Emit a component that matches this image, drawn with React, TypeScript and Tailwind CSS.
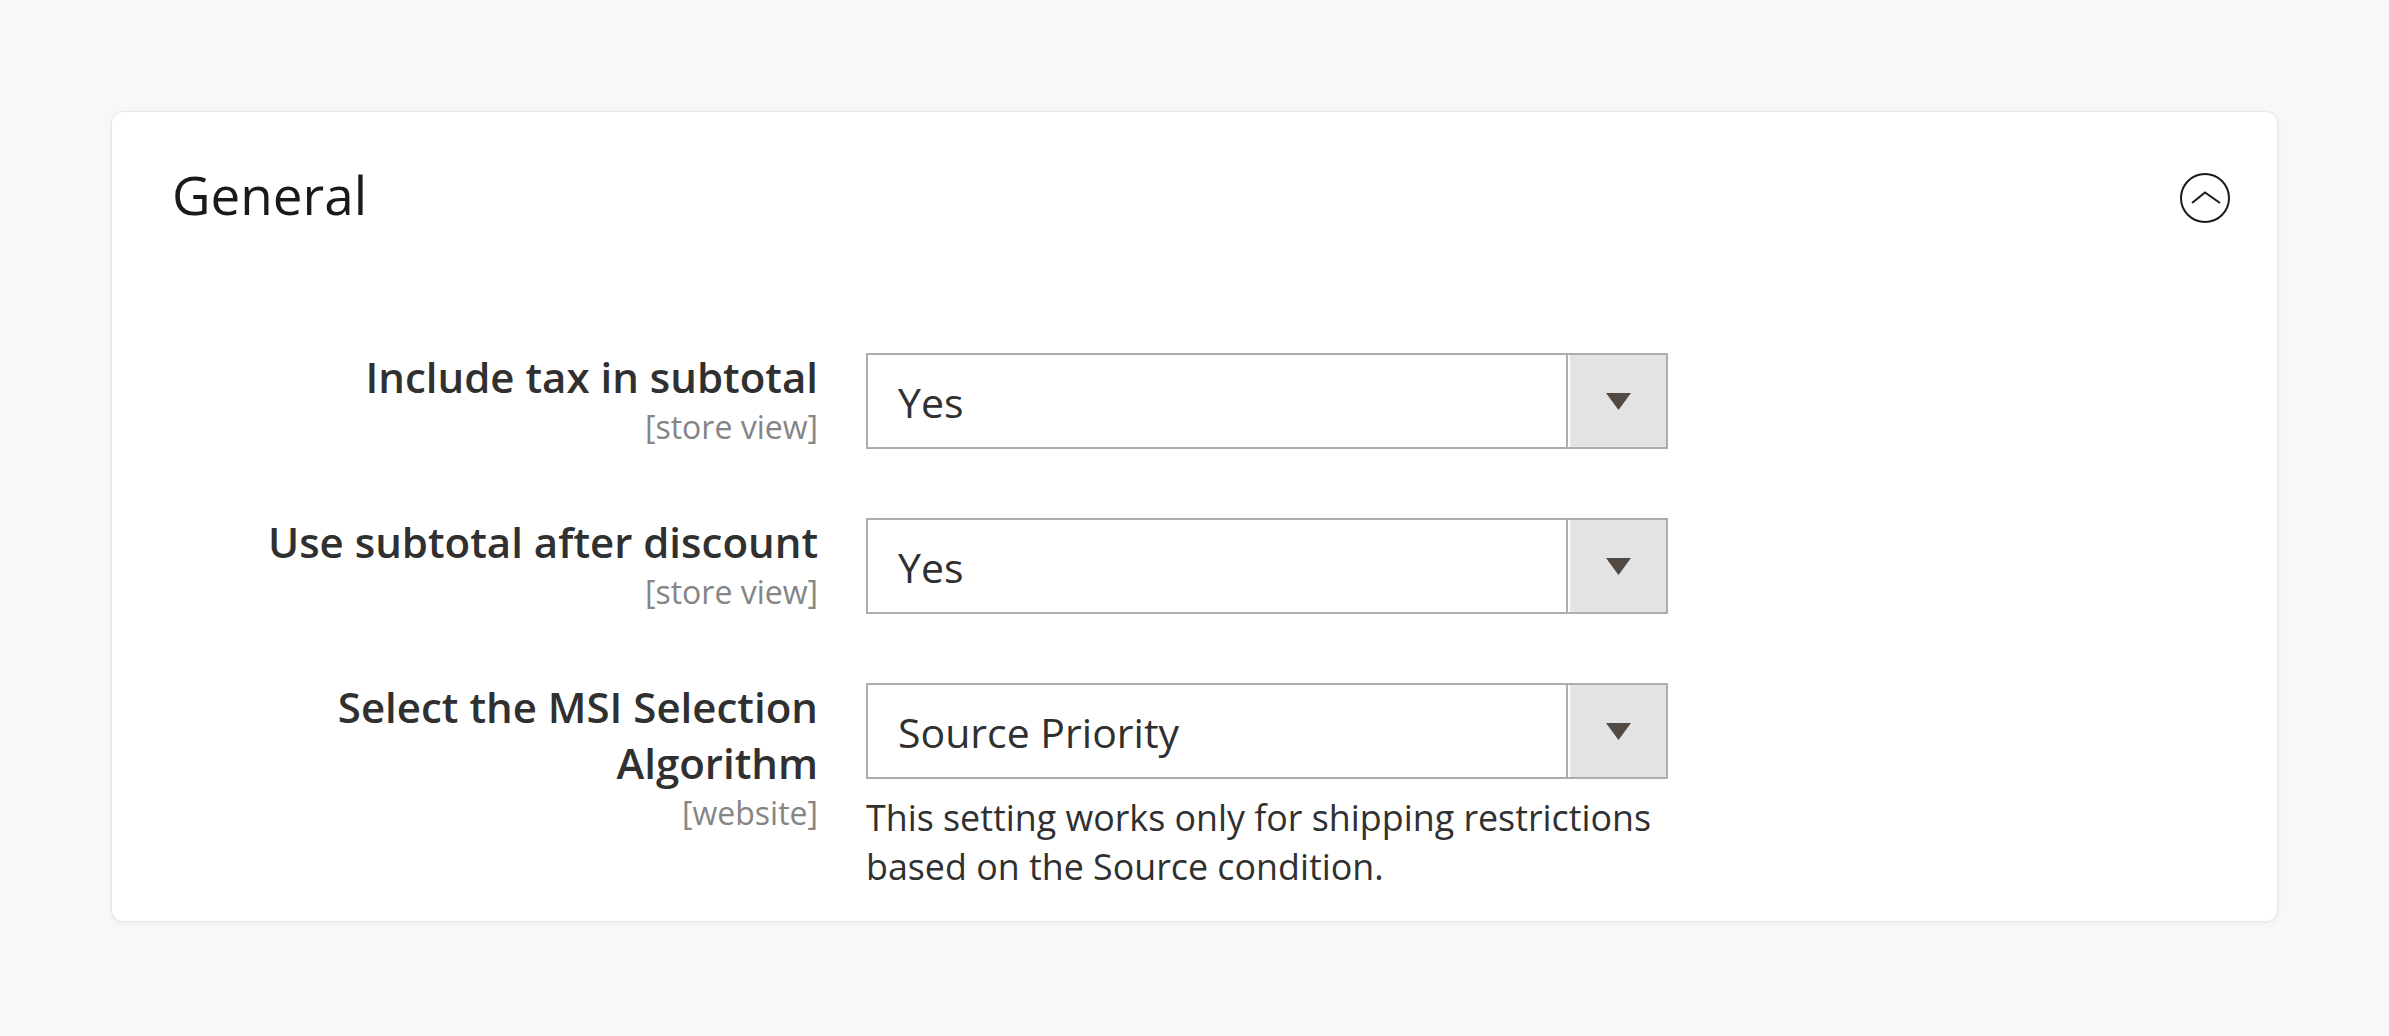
const rows = [
	{ label: "Include tax in subtotal", scope: "[store view]", value: "Yes" },
	{ label: "Use subtotal after discount", scope: "[store view]", value: "Yes" },
	{
		label: "Select the MSI Selection Algorithm",
		scope: "[website]",
		value: "Source Priority",
		note: "This setting works only for shipping restrictions based on the Source condition.",
	},
];

const Select = ({ value }: { value: string }) => {
	return (
		<div className="flex h-[96px] w-[802px] border-2 border-[#adadad] bg-white">
			<div className="flex flex-1 items-center pt-[3px] pl-[30px] text-[41px] text-[#303030]">
				{value}
			</div>
			<div className="flex border-l-2 border-[#adadad] bg-white pl-[2px]">
				<div className="flex w-[96px] items-center justify-center bg-[#e3e3e3]">
					<svg width="25" height="17" viewBox="0 0 25 17">
						<polygon points="0,0 25,0 12.5,17" fill="#514943" />
					</svg>
				</div>
			</div>
		</div>
	);
};

export default function App() {
	return (
		<div className="min-h-screen bg-[#f8f8f8] px-[111px] pt-[111px] font-['Open_Sans',sans-serif]">
			<section className="rounded-[12px] border border-[#e6e6e6] bg-white pt-[51px] pr-[47px] pb-[30px] pl-[60px] shadow-[0_2px_6px_rgba(0,0,0,0.05)]">
				<div className="flex items-start justify-between">
					<h2 className="text-[53px] leading-[64px] font-medium text-[#1a1a1a]">
						General
					</h2>
					<svg className="mt-[9px]" width="50" height="52" viewBox="0 0 50 52">
						<circle cx="25" cy="26" r="24" fill="none" stroke="#1a1a1a" strokeWidth="2" />
						<polyline
							points="12,31 25,20.5 40,31"
							fill="none"
							stroke="#1a1a1a"
							strokeWidth="2"
						/>
					</svg>
				</div>
				<div className="mt-[122px] flex flex-col gap-[65px] pl-[46px]">
					{rows.map((row) => (
						<div key={row.label} className="grid grid-cols-[600px_802px] gap-x-[48px]">
							<div className="text-right">
								<div className="text-[42px] leading-[56px] font-[560] text-[#303030]">
									{row.label}
								</div>
								<div className="text-[32px] leading-[44px] text-[#858585]">
									{row.scope}
								</div>
							</div>
							<div className="pt-[4px]">
								<Select value={row.value} />
								{row.note && (
									<p className="mt-[14px] w-[802px] text-[35.8px] leading-[49px] text-[#303030]">
										{row.note}
									</p>
								)}
							</div>
						</div>
					))}
				</div>
			</section>
		</div>
	);
}
